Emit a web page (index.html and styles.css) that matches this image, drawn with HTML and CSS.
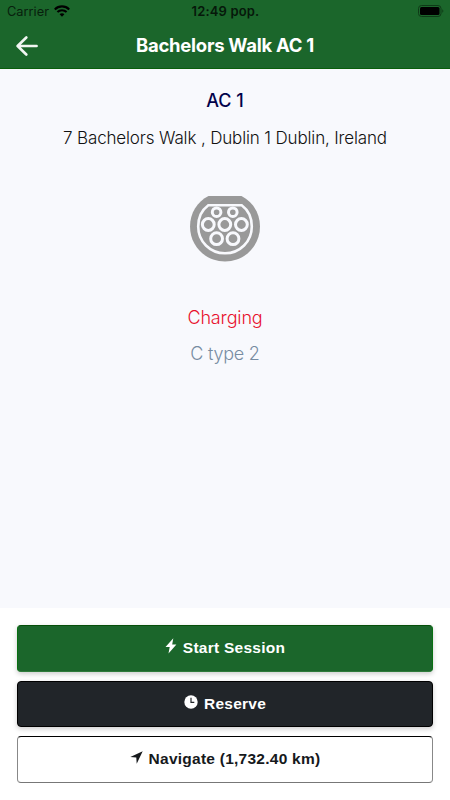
FILE: index.html
```html
<!DOCTYPE html>
<html lang="en">
<head>
  <meta charset="UTF-8" />
  <meta name="viewport" content="width=device-width, initial-scale=1.0" />
  <title>Bachelors Walk AC 1</title>
  <link rel="stylesheet" href="styles.css">
</head>
<body>
  <header class="header">
    <div class="status-bar">
      <div class="carrier">
        <span>Carrier</span>
        <svg width="16" height="12" viewBox="0 0 16 12" fill="none" stroke="#000" stroke-width="2.1">
          <path d="M0.8 4.4C4.8 0.4 11.2 0.4 15.2 4.4" />
          <path d="M3.4 7.1C6 4.6 10 4.6 12.6 7.1" />
          <path d="M8 11.8L5.6 9.3C6.9 8 9.1 8 10.4 9.3Z" fill="#000" stroke="none" />
        </svg>
      </div>
      <div class="time">12:49 pop.</div>
      <div class="battery">
        <svg width="26" height="12" viewBox="0 0 26 12">
          <rect x="0.5" y="0.5" width="22.5" height="11" rx="3" fill="none" stroke="#0e3a17" />
          <rect x="2" y="2" width="19.5" height="8" rx="1.5" fill="#000" />
          <path d="M24.3 4.2C25.7 4.8 25.7 7.2 24.3 7.8Z" fill="#0e3a17" />
        </svg>
      </div>
    </div>
    <div class="nav-bar">
      <a class="back" href="#" aria-label="Back">
        <svg width="22" height="20" viewBox="0 0 22 20" fill="none" stroke="#f1f6f2" stroke-width="2.6" stroke-linecap="round" stroke-linejoin="round">
          <path d="M10.3 1.5L1.6 10L10.3 18.5M2 10H20.6" />
        </svg>
      </a>
      <h1 class="title">Bachelors Walk AC 1</h1>
    </div>
  </header>

  <main class="station">
    <h2 class="station-name">AC 1</h2>
    <p class="address">7 Bachelors Walk , Dublin 1 Dublin, Ireland</p>
    <svg class="connector" width="70" height="66" viewBox="0 0 70 66">
      <path d="M18.5 0H51.5C62.5 5.5 70 17 70 30.5C70 50 54.5 65.5 35 65.5S0 50 0 30.5C0 17 7.5 5.5 18.5 0Z" fill="#999" />
      <g fill="none" stroke="#f8f9fd">
        <path d="M18.3 9.2H51.7C58.2 14 61.8 21.5 61.8 30.5C61.8 45.5 50 57.3 35 57.3S8.2 45.5 8.2 30.5C8.2 21.5 11.8 14 18.3 9.2Z" stroke-width="2.6" />
        <g stroke-width="3">
          <circle cx="26.6" cy="16.2" r="4.3" />
          <circle cx="42.8" cy="16.2" r="4.3" />
          <circle cx="18.3" cy="28.5" r="5.9" />
          <circle cx="34.8" cy="28.5" r="5.9" />
          <circle cx="51.4" cy="28.5" r="5.9" />
          <circle cx="26.6" cy="42.7" r="5.9" />
          <circle cx="43" cy="42.7" r="5.9" />
        </g>
      </g>
    </svg>
    <p class="status">Charging</p>
    <p class="type">C type 2</p>
  </main>

  <footer class="actions">
    <button class="btn btn-start">
      <svg width="12" height="16" viewBox="0 0 12 16" fill="currentColor">
        <path d="M8.3 0.3L0.5 9H4.7L3.5 15.5L11.4 6.4H7.2Z" />
      </svg>
      <span>Start Session</span>
    </button>
    <button class="btn btn-reserve">
      <svg width="14" height="14" viewBox="0 0 14 14">
        <circle cx="7" cy="7" r="6.7" fill="#fff" />
        <path d="M7 2.8V7.3H10.3" fill="none" stroke="#212529" stroke-width="1.2" />
      </svg>
      <span>Reserve</span>
    </button>
    <button class="btn btn-navigate">
      <svg width="13" height="13" viewBox="0 0 13 13" fill="currentColor">
        <path d="M12.7 0.2L0.3 5.9L6.3 6.6L6.7 12.8Z" />
      </svg>
      <span>Navigate (1,732.40 km)</span>
    </button>
  </footer>
</body>
</html>
```

FILE: styles.css
```css
* {
  box-sizing: border-box;
}

body {
  margin: 0;
  height: 100vh;
  display: flex;
  flex-direction: column;
  background-color: #fff;
  font-family: 'Inter', sans-serif;
}

h1, h2, p {
  margin: 0;
}

.header {
  height: 69px;
  background-color: #1b662b;
  border-bottom: 1px solid #095e0b;
}

.status-bar {
  display: grid;
  grid-template-columns: 1fr auto 1fr;
  align-items: center;
  height: 22px;
  padding: 0 6px 0 7px;
  color: #000;
}

.carrier {
  display: flex;
  align-items: center;
  gap: 5px;
  color: #08200d;
  font-size: 12.8px;
}

.carrier svg {
  margin-bottom: 1px;
}

.time {
  color: #06180a;
  font-size: 13px;
  font-weight: 600;
  letter-spacing: 0.15px;
}

.battery {
  display: flex;
  justify-content: flex-end;
}

.nav-bar {
  display: grid;
  grid-template-columns: 60px 1fr 60px;
  align-items: center;
  height: 47px;
}

.back {
  display: flex;
  padding-left: 16px;
}

.title {
  padding-bottom: 2px;
  color: #fff;
  font-size: 18.5px;
  font-weight: 650;
  letter-spacing: -0.28px;
  text-align: center;
}

.station {
  display: flex;
  flex-direction: column;
  align-items: center;
  height: 539px;
  padding-top: 19px;
  background-color: #f8f9fd;
}

.station-name {
  color: #02024b;
  font-size: 18px;
  font-weight: 550;
  line-height: 26px;
}

.address {
  margin-top: 11px;
  color: #111;
  font-size: 17px;
  font-weight: 300;
  letter-spacing: -0.15px;
  line-height: 26px;
}

.connector {
  margin-top: 45px;
}

.status {
  margin-top: 43px;
  color: #e8112d;
  font-size: 18px;
  font-weight: 300;
  letter-spacing: -0.15px;
  line-height: 26px;
}

.type {
  margin-top: 10px;
  color: #778ca2;
  font-size: 18px;
  font-weight: 300;
  letter-spacing: -0.25px;
  line-height: 26px;
}

.actions {
  display: flex;
  flex-direction: column;
  gap: 9px;
  padding: 17px 17px 0;
}

.btn {
  display: flex;
  justify-content: center;
  align-items: center;
  gap: 6px;
  height: 46.5px;
  padding: 0 6px;
  border: 1px solid #000;
  border-radius: 4px;
  font-family: 'Liberation Sans', sans-serif;
  font-size: 15.5px;
  font-weight: 700;
  letter-spacing: 0.25px;
}

.btn svg {
  margin-bottom: 4px;
}

.btn-start {
  background-color: #1b662b;
  border-color: #064f0a #087012 #2e7b3b;
  color: #fff;
  box-shadow: 0 2px 5px rgba(0, 0, 0, 0.2);
}

.btn-reserve {
  background-color: #212529;
  color: #fff;
  box-shadow: 0 2px 5px rgba(0, 0, 0, 0.2);
}

.btn-navigate {
  background-color: #fff;
  border-color: #000 #888 #777;
  color: #16191c;
}
```
